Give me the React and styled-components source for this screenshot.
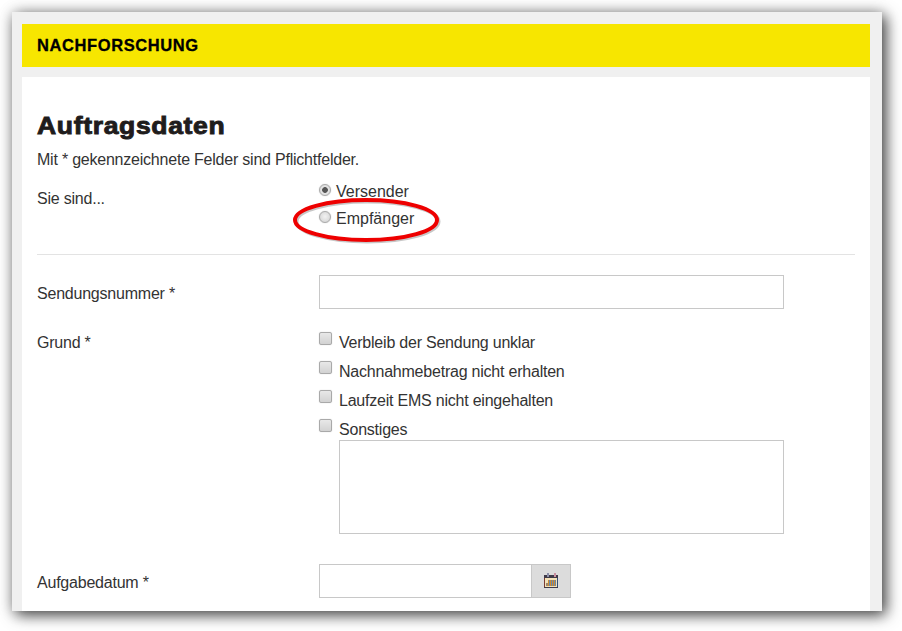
import styled, { createGlobalStyle } from "styled-components";

const GlobalStyle = createGlobalStyle`
  html, body {
    margin: 0;
    height: 631px;
    overflow: hidden;
    background: #fff;
  }
`;

export default function App() {
  return (
    <>
      <GlobalStyle />
      <Page>
        <Frame>
          <Banner>Nachforschung</Banner>
          <Card>
            <Title>Auftragsdaten</Title>
            <Hint>Mit * gekennzeichnete Felder sind Pflichtfelder.</Hint>
            <SenderRow>
              <SenderLabel>Sie sind...</SenderLabel>
              <RadioGroup>
                <RadioOption>
                  <Radio name="role" defaultChecked />
                  Versender
                </RadioOption>
                <RadioOption>
                  <Radio name="role" />
                  Empfänger
                </RadioOption>
                <Highlight viewBox="0 0 150 50">
                  <ellipse cx="73" cy="24" rx="71" ry="20" fill="none" stroke="#000" strokeOpacity=".22" strokeWidth="4" transform="translate(1.5 1.5)" />
                  <ellipse cx="73" cy="24" rx="71" ry="20" fill="none" stroke="#ee0000" strokeWidth="4" />
                </Highlight>
              </RadioGroup>
            </SenderRow>
            <Rule />
            <FieldRow>
              <FieldLabel>Sendungsnummer *</FieldLabel>
              <TextInput />
            </FieldRow>
            <ReasonRow>
              <ReasonLabel>Grund *</ReasonLabel>
              <div>
                <CheckOption>
                  <Checkbox />
                  Verbleib der Sendung unklar
                </CheckOption>
                <CheckOption>
                  <Checkbox />
                  Nachnahmebetrag nicht erhalten
                </CheckOption>
                <CheckOption>
                  <Checkbox />
                  Laufzeit EMS nicht eingehalten
                </CheckOption>
                <CheckOption>
                  <Checkbox />
                  Sonstiges
                </CheckOption>
                <Comment />
              </div>
            </ReasonRow>
            <DateRow>
              <FieldLabel>Aufgabedatum *</FieldLabel>
              <DateInput />
              <DateButton type="button">
                <CalendarIcon />
              </DateButton>
            </DateRow>
          </Card>
        </Frame>
      </Page>
    </>
  );
}

function CalendarIcon() {
  return (
    <svg width="14" height="15" viewBox="0 0 14 15">
      <rect x="0" y="2" width="14" height="13" fill="#3f3a48" />
      <rect x="0" y="5" width="1" height="9" fill="#7a3a30" />
      <rect x="13" y="5" width="1" height="9" fill="#34507c" />
      <rect x="1" y="5" width="12" height="9" fill="#f3e2b8" />
      <rect x="4" y="7" width="8" height="6" fill="#d08a30" />
      <rect x="2" y="10" width="2" height="3" fill="#d08a30" />
      <path d="M5.5 7v6M7.5 7v6M9.5 7v6M11.5 7v6M3 10v3" stroke="#6a88a8" strokeWidth="1" />
      <rect x="3" y="0" width="2" height="4" fill="#8d8fa8" />
      <rect x="10" y="0" width="2" height="4" fill="#c98fa0" />
    </svg>
  );
}

const Page = styled.div`
  padding: 12px 20px 20px 12px;
  font-family: "Liberation Sans", Arial, sans-serif;
  font-size: 16px;
  letter-spacing: -0.22px;
  color: #333;
`;

const Frame = styled.div`
  width: 870px;
  height: 599px;
  box-sizing: border-box;
  padding: 12px 12px 0 10px;
  background: #f0f0f0;
  box-shadow: 4px 4px 14px rgba(0, 0, 0, 0.7), 0 0 14px rgba(0, 0, 0, 0.2);
`;

const Banner = styled.h2`
  height: 43px;
  margin: 0 0 10px;
  padding-left: 15px;
  background: #f7e600;
  color: #000;
  font-size: 16.5px;
  font-weight: 700;
  line-height: 43px;
  letter-spacing: 0.6px;
  text-transform: uppercase;
  -webkit-text-stroke: 0.3px #000;
`;

const Card = styled.div`
  height: 534px;
  box-sizing: border-box;
  padding: 34px 15px 0;
  background: #fff;
`;

const Title = styled.h1`
  margin: 0;
  color: #1f1c1c;
  font-size: 24px;
  font-weight: 700;
  line-height: 30px;
  letter-spacing: 0.6px;
  -webkit-text-stroke: 0.9px #1f1c1c;
  transform: scaleX(1.105);
  transform-origin: left center;
`;

const Hint = styled.p`
  margin: 9px 0 0;
  line-height: 20px;
`;

const SenderRow = styled.div`
  display: flex;
  margin-top: 11px;
`;

const SenderLabel = styled.span`
  width: 282px;
  padding-top: 8px;
  line-height: 20px;
`;

const RadioGroup = styled.div`
  position: relative;
  display: flex;
  flex-direction: column;
  gap: 7px;
  padding-top: 1px;
`;

const RadioOption = styled.label`
  display: flex;
  align-items: center;
  gap: 5px;
  height: 20px;
  letter-spacing: 0;
`;

const Radio = styled.input.attrs({ type: "radio" })`
  appearance: none;
  width: 12px;
  height: 12px;
  margin: -5px 0 0;
  border: 1px solid #a9a9a9;
  border-radius: 50%;
  background: radial-gradient(circle at 50% 45%, #f2f2f2, #d0d0d0);
  box-shadow: 0 0 1px rgba(0, 0, 0, 0.3);

  &:checked {
    background: radial-gradient(circle, #555 0 2.5px, #e4e4e4 3.2px, #d8d8d8);
  }
`;

const Highlight = styled.svg`
  position: absolute;
  left: -26px;
  top: 15px;
  width: 150px;
  height: 50px;
  overflow: visible;
`;

const Rule = styled.hr`
  height: 1px;
  margin: 25px 0 20px;
  border: 0;
  background: #e3e3e3;
`;

const FieldRow = styled.div`
  display: flex;
  align-items: center;
`;

const FieldLabel = styled.label`
  width: 282px;
  flex: none;
  box-sizing: border-box;
  padding-top: 4px;
  line-height: 20px;
`;

const TextInput = styled.input`
  width: 465px;
  height: 34px;
  box-sizing: border-box;
  border: 1px solid #c8c8c8;
  background: #fff;
`;

const ReasonRow = styled.div`
  display: grid;
  grid-template-columns: 282px 465px;
  margin-top: 23px;
`;

const ReasonLabel = styled.span`
  padding-top: 1px;
  line-height: 20px;
`;

const CheckOption = styled.label`
  display: flex;
  align-items: center;
  gap: 7px;
  box-sizing: border-box;
  height: 20px;
  padding-top: 2px;
  margin-bottom: 9px;

  &:nth-of-type(4) {
    margin-bottom: 1px;
  }
`;

const Checkbox = styled.input.attrs({ type: "checkbox" })`
  appearance: none;
  width: 13px;
  height: 13px;
  margin: -9px 0 0;
  border: 1px solid #a9a9a9;
  border-radius: 2px;
  background: linear-gradient(#e8e8e8, #d2d2d2);
  box-shadow: 0 0 1px rgba(0, 0, 0, 0.25);
`;

const Comment = styled.textarea`
  display: block;
  width: 445px;
  height: 94px;
  box-sizing: border-box;
  margin-left: 20px;
  border: 1px solid #c8c8c8;
  resize: none;
`;

const DateRow = styled.div`
  display: flex;
  align-items: center;
  margin-top: 30px;
`;

const DateInput = styled.input`
  width: 212px;
  height: 34px;
  box-sizing: border-box;
  border: 1px solid #c8c8c8;
  border-right: 0;
`;

const DateButton = styled.button`
  display: flex;
  align-items: center;
  justify-content: center;
  width: 40px;
  height: 34px;
  padding: 0 0 2px;
  border: 1px solid #c8c8c8;
  background: #dcdcdc;
`;
